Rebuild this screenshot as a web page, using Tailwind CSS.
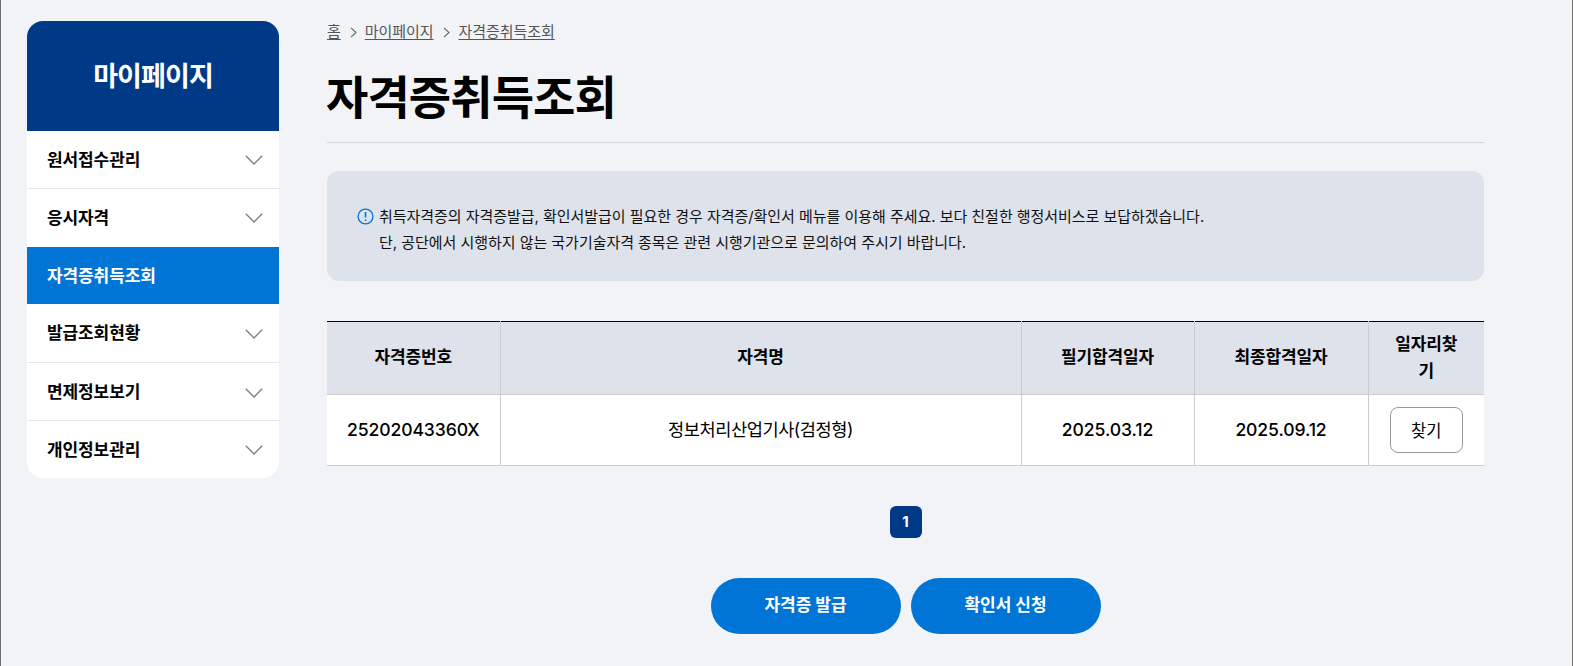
<!DOCTYPE html>
<html lang="ko">
  <head>
    <meta charset="UTF-8" />
    <title>자격증취득조회</title>
    <script src="https://cdn.jsdelivr.net/npm/@tailwindcss/browser@4"></script>
  </head>
  <body class="bg-[#f1f3f7] font-['Inter','Noto_Sans_CJK_KR',sans-serif] text-black">
    <div class="flex h-[666px] overflow-hidden border-x border-x-[#6f6f6f] pl-[26px] pt-[21px]">
      <!-- sidebar -->
      <aside class="w-[252px] h-[457px] shrink-0 rounded-[16px] bg-white overflow-hidden">
        <div class="flex h-[110px] items-center justify-center bg-[#003985] pt-[2px] text-[27px] font-bold tracking-[-0.9px] text-white">마이페이지</div>
        <div class="flex h-[58px] items-center justify-between border-b border-[#e4e6ea] pl-5 pr-[16px] text-[17px] font-bold tracking-[-0.1px]">
          <span class="mt-[2px]">원서접수관리</span>
          <svg class="w-[18px] h-[10px]" viewBox="0 0 18 10" fill="none" stroke="#808080" stroke-width="1.4"><path d="M0.8 0.8 9 9 17.2 0.8" /></svg>
        </div>
        <div class="flex h-[58px] items-center justify-between pl-5 pr-[16px] text-[17px] font-bold tracking-[-0.1px]">
          <span class="mt-[2px]">응시자격</span>
          <svg class="w-[18px] h-[10px]" viewBox="0 0 18 10" fill="none" stroke="#808080" stroke-width="1.4"><path d="M0.8 0.8 9 9 17.2 0.8" /></svg>
        </div>
        <div class="flex h-[57px] items-center bg-[#0075d5] pl-5 text-[17px] font-bold tracking-[-0.1px] text-white">
          <span class="mt-[2px]">자격증취득조회</span>
        </div>
        <div class="flex h-[59px] items-center justify-between border-b border-[#e4e6ea] pl-5 pr-[16px] text-[17px] font-bold tracking-[-0.1px]">
          <span class="mt-[2px]">발급조회현황</span>
          <svg class="mt-[2px] w-[18px] h-[10px]" viewBox="0 0 18 10" fill="none" stroke="#808080" stroke-width="1.4"><path d="M0.8 0.8 9 9 17.2 0.8" /></svg>
        </div>
        <div class="flex h-[58px] items-center justify-between border-b border-[#e4e6ea] pl-5 pr-[16px] text-[17px] font-bold tracking-[-0.1px]">
          <span class="mt-[2px]">면제정보보기</span>
          <svg class="mt-[2px] w-[18px] h-[10px]" viewBox="0 0 18 10" fill="none" stroke="#808080" stroke-width="1.4"><path d="M0.8 0.8 9 9 17.2 0.8" /></svg>
        </div>
        <div class="flex h-[57px] items-center justify-between pl-5 pr-[16px] text-[17px] font-bold tracking-[-0.1px]">
          <span class="mt-[2px]">개인정보관리</span>
          <svg class="w-[18px] h-[10px]" viewBox="0 0 18 10" fill="none" stroke="#808080" stroke-width="1.4"><path d="M0.8 0.8 9 9 17.2 0.8" /></svg>
        </div>
      </aside>

      <!-- main -->
      <main class="ml-[48px] w-[1157px] shrink-0">
        <nav class="flex h-[22px] items-center text-[15px] text-[#555] tracking-[-0.05px]">
          <a class="underline underline-offset-2">홈</a>
          <svg class="ml-[9px] mr-[8px] w-[7px] h-[11px]" viewBox="0 0 7 11" fill="none" stroke="#666" stroke-width="1.1"><path d="M1 0.8 6 5.5 1 10.2" /></svg>
          <a class="underline underline-offset-2">마이페이지</a>
          <svg class="mx-[9px] w-[7px] h-[11px]" viewBox="0 0 7 11" fill="none" stroke="#666" stroke-width="1.1"><path d="M1 0.8 6 5.5 1 10.2" /></svg>
          <a class="underline underline-offset-2">자격증취득조회</a>
        </nav>
        <h1 class="mt-[15px] h-[85px] border-b border-[#d2d5dc] text-[46px] leading-[78px] font-bold tracking-[-0.9px]"><span class="-ml-px">자격증취득조회</span></h1>

        <div class="mt-[28px] flex h-[110px] items-center rounded-[12px] bg-[#dee2ea] pl-[30px] pt-[7px] text-[15px] leading-[26px] text-[#111] tracking-[-0.04px]">
          <div>
            <div class="flex items-center">
              <svg class="mr-[5px] w-[17px] h-[17px]" viewBox="0 0 17 17" fill="none"><circle cx="8.5" cy="8.5" r="7.4" stroke="#0075d5" stroke-width="1.3" /><path d="M8.5 4v5.6M8.5 11.4v1.6" stroke="#0075d5" stroke-width="1.6" /></svg>
              <span>취득자격증의 자격증발급, 확인서발급이 필요한 경우 자격증/확인서 메뉴를 이용해 주세요. 보다 친절한 행정서비스로 보답하겠습니다.</span>
            </div>
            <p class="pl-[22px]">단, 공단에서 시행하지 않는 국가기술자격 종목은 관련 시행기관으로 문의하여 주시기 바랍니다.</p>
          </div>
        </div>

        <table class="mt-[40px] w-[1157px] table-fixed border-collapse border-t border-black text-[17.6px] font-medium">
          <colgroup>
            <col class="w-[173px]" />
            <col class="w-[521px]" />
            <col class="w-[173px]" />
            <col class="w-[174px]" />
            <col class="w-[116px]" />
          </colgroup>
          <thead>
            <tr class="h-[73px] bg-[#dee2ea] text-[17px]">
              <th class="border-r border-[#cccccc] px-4 font-bold tracking-[-0.1px]">자격증번호</th>
              <th class="border-r border-[#cccccc] px-4 font-bold tracking-[-0.1px]">자격명</th>
              <th class="border-r border-[#cccccc] px-4 font-bold tracking-[-0.1px]">필기합격일자</th>
              <th class="border-r border-[#cccccc] px-4 font-bold tracking-[-0.1px]">최종합격일자</th>
              <th class="px-5 font-bold leading-[27px] tracking-[-0.1px]">일자리찾기</th>
            </tr>
          </thead>
          <tbody>
            <tr class="h-[71px] border-y border-[#cccccc] bg-white text-center">
              <td class="border-r border-[#cccccc] tracking-[-0.1px]">25202043360X</td>
              <td class="border-r border-[#cccccc] font-normal tracking-[-0.46px]">정보처리산업기사(검정형)</td>
              <td class="border-r border-[#cccccc] tracking-[-0.1px]">2025.03.12</td>
              <td class="border-r border-[#cccccc] tracking-[-0.1px]">2025.09.12</td>
              <td><button class="h-[46px] w-[73px] rounded-[8px] border border-[#999] bg-white pt-[2px] text-[16.5px] font-normal">찾기</button></td>
            </tr>
          </tbody>
        </table>

        <div class="mt-[40px] flex justify-center">
          <span class="flex h-[32px] w-[32px] items-center justify-center rounded-[6px] bg-[#003985] text-[15px] font-bold text-white">1</span>
        </div>
        <div class="mt-[40px] flex justify-center gap-[10px]">
          <button class="h-[56px] w-[190px] rounded-full bg-[#0075d5] text-[17px] font-bold text-white">자격증 발급</button>
          <button class="h-[56px] w-[190px] rounded-full bg-[#0075d5] text-[17px] font-bold text-white">확인서 신청</button>
        </div>
      </main>
    </div>
  </body>
</html>
